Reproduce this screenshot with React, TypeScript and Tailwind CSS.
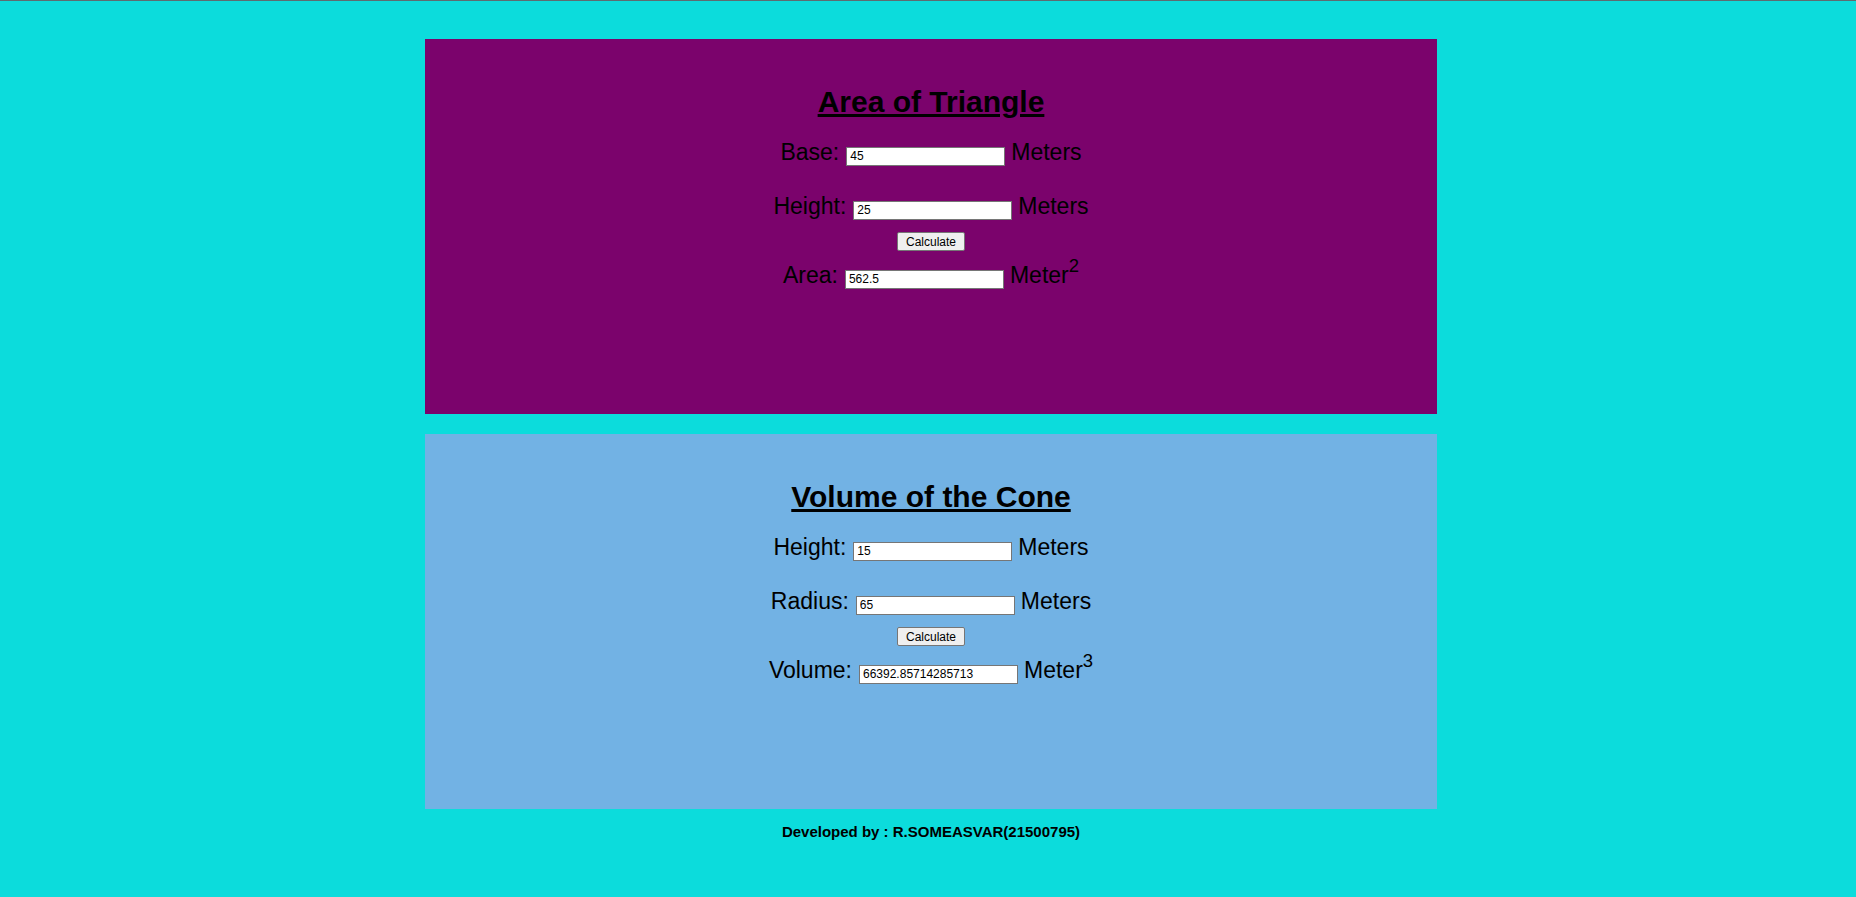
import { useState } from "react";

function Row({ label, value, unit, sup, onChange }: { label: string; value: string; unit: string; sup?: string; onChange: (v: string) => void }) {
    return (
        <div className="flex h-[28px] items-baseline justify-center text-[23px] leading-[26px] text-black">
            <span>{label}</span>
            <input
                type="text"
                value={value}
                onChange={(e) => onChange(e.target.value)}
                className="ml-[7px] mr-[6px] h-[19px] w-[159px] border border-[#767676] bg-white px-[3px] py-0 text-[12px] leading-[14px] text-black outline-none"
            />
            <span>
                {unit}
                {sup && <sup className="top-[-11px] text-[18.5px]">{sup}</sup>}
            </span>
        </div>
    );
}

function CalcButton({ onClick }: { onClick: () => void }) {
    return (
        <button
            onClick={onClick}
            className="mt-[11px] h-[19px] w-[68px] rounded-[2px] border border-[#767676] bg-[#efefef] p-0 text-[12px] leading-[14px] text-black"
        >
            Calculate
        </button>
    );
}

export default function App() {
    const [base, setBase] = useState("45");
    const [height, setHeight] = useState("25");
    const [area, setArea] = useState("562.5");

    const [coneHeight, setConeHeight] = useState("15");
    const [radius, setRadius] = useState("65");
    const [volume, setVolume] = useState("66392.85714285713");

    const calcArea = () => {
        setArea(String(0.5 * Number(base) * Number(height)));
    };

    const calcVolume = () => {
        setVolume(String((1 / 3) * (22 / 7) * Number(radius) * Number(radius) * Number(coneHeight)));
    };

    return (
        <div className="min-h-screen bg-[#0cdcdc] font-['Liberation_Sans',Arial,sans-serif]">
            <div className="h-px bg-[#5d6c70]" />
            <div className="ml-[425px] w-[1012px] pt-[38px]">
                {/* triangle */}
                <div className="flex h-[375px] flex-col items-center bg-[#7b036c] pt-[46px]">
                    <h2 className="text-[30px] font-bold leading-[34px] text-black underline">Area of Triangle</h2>
                    <div className="mt-[20px]">
                        <Row label="Base:" value={base} unit="Meters" onChange={setBase} />
                    </div>
                    <div className="mt-[26px]">
                        <Row label="Height:" value={height} unit="Meters" onChange={setHeight} />
                    </div>
                    <CalcButton onClick={calcArea} />
                    <div className="mt-[11px]">
                        <Row label="Area:" value={area} unit="Meter" sup="2" onChange={setArea} />
                    </div>
                </div>

                {/* cone */}
                <div className="mt-[20px] flex h-[375px] flex-col items-center bg-[#72b2e4] pt-[46px]">
                    <h2 className="text-[30px] font-bold leading-[34px] text-black underline">Volume of the Cone</h2>
                    <div className="mt-[20px]">
                        <Row label="Height:" value={coneHeight} unit="Meters" onChange={setConeHeight} />
                    </div>
                    <div className="mt-[26px]">
                        <Row label="Radius:" value={radius} unit="Meters" onChange={setRadius} />
                    </div>
                    <CalcButton onClick={calcVolume} />
                    <div className="mt-[11px]">
                        <Row label="Volume:" value={volume} unit="Meter" sup="3" onChange={setVolume} />
                    </div>
                </div>

                <p className="mt-[14px] text-center text-[15px] font-bold leading-[17px] text-black">
                    Developed by : R.SOMEASVAR(21500795)
                </p>
            </div>
        </div>
    );
}
